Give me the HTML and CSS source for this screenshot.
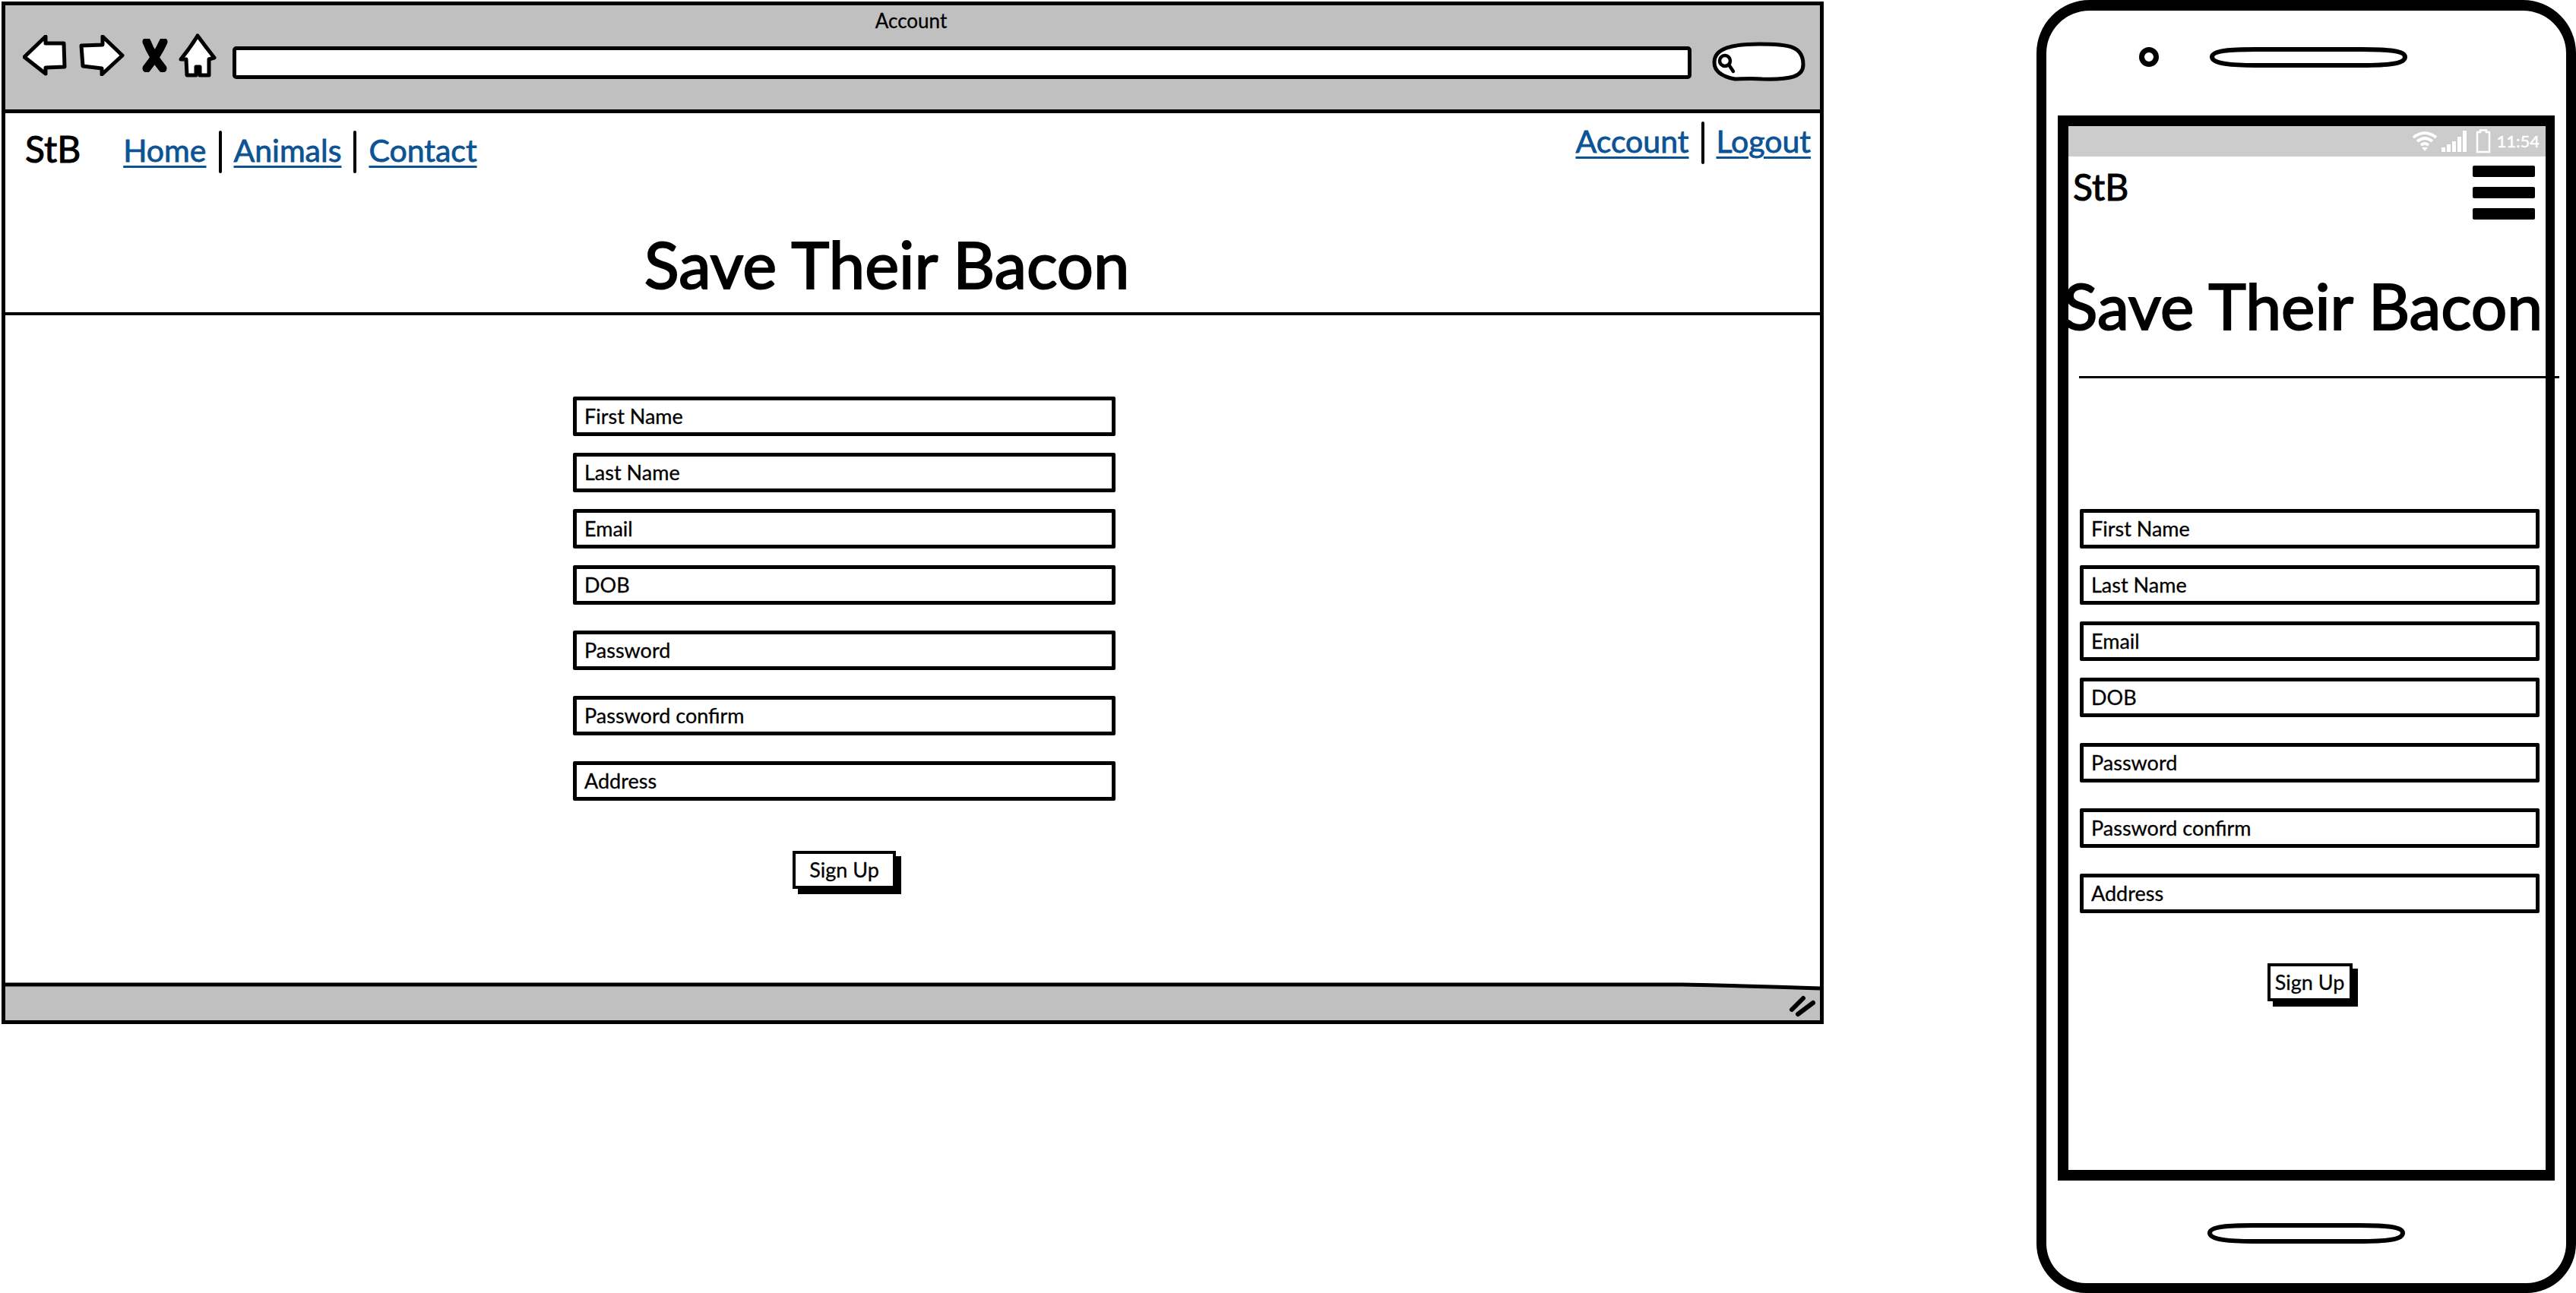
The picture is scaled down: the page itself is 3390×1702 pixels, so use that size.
FILE: index.html
```html
<!DOCTYPE html>
<html lang="en">
<head>
    <meta charset="UTF-8">
    <title>Save Their Bacon wireframes</title>
    <link rel="stylesheet" href="styles.css">
</head>
<body>
<div class="page">

    <!-- Desktop browser -->
    <div class="browser">
        <div class="toolbar">
            <div class="window-title">Account</div>
            <div class="controls">
                <svg class="tool tool-back" width="58" height="54" viewBox="0 0 58 54"><path class="ico" d="M2 29 L30 2 L30 11 L54 11 L55 42 L30 43 L30 51 Z"/></svg>
                <svg class="tool tool-forward" width="60" height="54" viewBox="0 0 60 54"><path class="ico" d="M57 27 L31 2 L31 13 L3 14 L5 41 L30 44 L30 52 Z"/></svg>
                <svg class="tool tool-stop" width="36" height="44" viewBox="0 0 36 44"><path class="ico-x" d="M7 4 Q14 22 28 39 M29 4 Q22 20 7 39"/></svg>
                <svg class="tool tool-home" width="50" height="58" viewBox="0 0 50 58"><path class="ico" d="M25 3 Q36 18 47 32 L40 34 L40 55 L28 55 L28 44 L23 44 L23 55 L11 55 L10 34 L3 34 Q16 18 25 3 Z"/></svg>
                <div class="address-bar"></div>
                <svg class="tool-search" width="124" height="54" viewBox="0 0 124 54">
                    <path class="ico" d="M3 27 C3 8 28 3 62 3 C100 3 120 5 120 30 C120 46 104 50 66 49 C50 48 38 49 30 49 C14 46 3 39 3 27 Z"/>
                    <circle class="ico-glass" cx="17" cy="25" r="7"/>
                    <path class="ico-glass" d="M22 30 L28 39"/>
                </svg>
            </div>
        </div>

        <div class="site">
            <nav class="site-nav">
                <div class="nav-left">
                    <span class="brand">StB</span>
                    <a class="nav-link" href="#">Home</a>
                    <i class="nav-sep"></i>
                    <a class="nav-link" href="#">Animals</a>
                    <i class="nav-sep"></i>
                    <a class="nav-link" href="#">Contact</a>
                </div>
                <div class="nav-right">
                    <a class="nav-link" href="#">Account</a>
                    <i class="nav-sep"></i>
                    <a class="nav-link" href="#">Logout</a>
                </div>
            </nav>
            <h1 class="site-title">Save Their Bacon</h1>
            <hr class="title-rule">

            <form class="signup">
                <div class="field">First Name</div>
                <div class="field">Last Name</div>
                <div class="field">Email</div>
                <div class="field">DOB</div>
                <div class="field spaced">Password</div>
                <div class="field spaced">Password confirm</div>
                <div class="field spaced">Address</div>
                <div class="btn-row"><div class="btn">Sign Up</div></div>
            </form>
        </div>

        <svg class="statusbar" width="2388" height="50" viewBox="0 0 2388 50">
            <path class="statusbar-fill" d="M0 3 L2206 3 Q2300 5 2388 8 L2388 50 L0 50 Z"/>
            <path class="statusbar-line" d="M0 3 L2206 3 Q2300 5 2388 8"/>
            <path class="statusbar-grip" d="M2351 36 L2366 21 M2359 42 L2379 27"/>
        </svg>
    </div>

    <!-- Phone -->
    <div class="phone">
        <div class="phone-top">
            <div class="camera"></div>
            <svg class="speaker" width="260" height="27" viewBox="0 0 260 27"><path d="M3 13 C3 4 30 3 60 3 L200 3 C235 3 257 5 257 13 C257 22 235 24 200 24 L60 24 C30 24 3 22 3 13 Z"/></svg>
        </div>
        <div class="screen">
            <div class="status">
                <svg width="34" height="28" viewBox="0 0 34 28"><path class="wifi" d="M2 9 Q17 -3 32 9 M7 14 Q17 6 27 14 M12 19 Q17 15 22 19"/><path class="wifi-dot" d="M13 22 L21 22 L17 27 Z"/></svg>
                <svg width="34" height="28" viewBox="0 0 34 28"><path class="bars" d="M0 22h5v6h-5z M7 18h5v10h-5z M14 14h5v14h-5z M21 8h5v20h-5z M28 0h5v28h-5z"/></svg>
                <svg class="battery" width="20" height="32" viewBox="0 0 20 32"><path class="batt" d="M2 4 H6 V1.500 H14 V4 H18 V30 H2 Z"/></svg>
                <span class="clock">11:54</span>
            </div>
            <div class="phone-nav">
                <span class="brand">StB</span>
                <div class="burger"><i></i><i></i><i></i></div>
            </div>
            <h1 class="phone-title">Save Their Bacon</h1>
            <hr class="phone-rule">
            <form class="signup phone-form">
                <div class="field">First Name</div>
                <div class="field">Last Name</div>
                <div class="field">Email</div>
                <div class="field">DOB</div>
                <div class="field spaced">Password</div>
                <div class="field spaced">Password confirm</div>
                <div class="field spaced">Address</div>
                <div class="btn-row"><div class="btn">Sign Up</div></div>
            </form>
        </div>
        <div class="phone-bottom">
            <svg class="speaker" width="260" height="27" viewBox="0 0 260 27"><path d="M3 13 C3 4 30 3 60 3 L200 3 C235 3 257 5 257 13 C257 22 235 24 200 24 L60 24 C30 24 3 22 3 13 Z"/></svg>
        </div>
    </div>

</div>
</body>
</html>
```

FILE: styles.css
```css
/* Basic Reset */
* {
    margin: 0;
    padding: 0;
    box-sizing: border-box;
}

body {
    font-family: Lato, "Open Sans", sans-serif;
    background-color: white;
    color: #000;
    width: 3390px;
    height: 1702px;
    overflow: hidden;
}

.page {
    display: flex;
    align-items: flex-start;
    padding-left: 2px;
}

/* Browser window */
.browser {
    width: 2398px;
    height: 1346px;
    margin-top: 2px;
    border: 5px solid #000;
    display: flex;
    flex-direction: column;
}

.toolbar {
    height: 142px;
    background-color: #c0c0c0;
    border-bottom: 5px solid #000;
    padding-left: 23px;
}

.window-title {
    height: 39px;
    padding: 7px 27px 0 0;
    text-align: center;
    font-size: 26px;
    line-height: 26px;
    -webkit-text-stroke: 0.3px #000;
}

.controls {
    display: flex;
    align-items: center;
    height: 62px;
}

.tool { margin-bottom: 8px; }
.tool-forward { margin-left: 16px; }
.tool-stop { margin-left: 22px; }
.tool-home { margin-left: 13px; }
.tool-search { margin: 10px 0 0 27px; }

.ico {
    fill: white;
    stroke: #000;
    stroke-width: 5;
    stroke-linejoin: round;
}

.ico-x {
    fill: none;
    stroke: #000;
    stroke-width: 11;
    stroke-linecap: round;
}

.ico-glass {
    fill: none;
    stroke: #000;
    stroke-width: 4.500;
    stroke-linecap: round;
}

.address-bar {
    width: 1920px;
    height: 43px;
    margin: 10px 0 0 21px;
    background-color: white;
    border: 5px solid #000;
    border-radius: 5px;
}

/* Page inside the browser */
.site {
    flex: 1;
}

.site-nav {
    display: flex;
    justify-content: space-between;
    align-items: flex-start;
    height: 113px;
    padding: 7px 12px 0 28px;
}

.nav-left,
.nav-right {
    display: flex;
    align-items: center;
}

.nav-left { padding-top: 12px; }

.brand {
    font-size: 48px;
    line-height: 56px;
    margin: -4px 56px 0 -2px;
    -webkit-text-stroke: 1px #000;
}

.nav-link {
    font-size: 41px;
    line-height: 56px;
    color: #0b5394;
    text-decoration: underline;
    text-decoration-thickness: 3px;
    text-underline-offset: 5px;
    -webkit-text-stroke: 0.8px #0b5394;
}

.nav-sep {
    width: 4px;
    height: 56px;
    margin: 4px 16px 0;
    background-color: #000;
    border-radius: 2px;
}

.site-title {
    height: 149px;
    padding: 39px 68px 0 0;
    text-align: center;
    font-size: 85px;
    line-height: 92px;
    font-weight: 400;
    -webkit-text-stroke: 2px #000;
}

.title-rule {
    height: 4px;
    border: none;
    background-color: #000;
}

/* Sign up form */
.signup {
    display: flex;
    flex-direction: column;
    width: 714px;
    margin: 107px 0 0 747px;
}

.field {
    height: 52px;
    margin-bottom: 22px;
    padding-left: 10px;
    border: 5px solid #000;
    border-radius: 2px;
    font-size: 27px;
    line-height: 41px;
    -webkit-text-stroke: 0.3px #000;
}

.field.spaced {
    margin-top: 12px;
}

.btn-row {
    display: flex;
    justify-content: center;
    margin-top: 44px;
}

.btn {
    width: 136px;
    height: 50px;
    border: 4px solid #000;
    box-shadow: 7px 7px 0 #000;
    background-color: white;
    text-align: center;
    font-size: 27px;
    line-height: 42px;
    -webkit-text-stroke: 0.3px #000;
}

/* Browser status bar */
.statusbar {
    display: block;
}

.statusbar-fill {
    fill: #c0c0c0;
}

.statusbar-line {
    fill: none;
    stroke: #000;
    stroke-width: 5;
}

.statusbar-grip {
    fill: none;
    stroke: #000;
    stroke-width: 6;
    stroke-linecap: round;
}

/* Phone */
.phone {
    width: 710px;
    height: 1702px;
    margin-left: 280px;
    border: 13px solid #000;
    border-top-width: 14px;
    border-radius: 70px 70px 65px 65px;
}

.phone-top {
    display: flex;
    align-items: center;
    gap: 67px;
    height: 138px;
    padding: 0 0 16px 122px;
}

.camera {
    width: 26px;
    height: 26px;
    border: 7px solid #000;
    border-radius: 50%;
}

.speaker {
    display: block;
}

.speaker path {
    fill: white;
    stroke: #000;
    stroke-width: 6;
}

.screen {
    width: 654px;
    height: 1402px;
    margin-left: 15px;
    border: solid #000;
    border-width: 14px 12px 14px 14px;
}

.status {
    display: flex;
    align-items: center;
    justify-content: flex-end;
    gap: 5px;
    height: 40px;
    padding-right: 8px;
    background-color: #ccc;
}

.wifi {
    fill: none;
    stroke: white;
    stroke-width: 4;
}

.wifi-dot { fill: white; }
.bars { fill: white; }

.batt {
    fill: none;
    stroke: white;
    stroke-width: 2.500;
}

.battery { margin: 0 2px 0 6px; }

.clock {
    color: white;
    font-size: 22px;
    line-height: 24px;
    font-weight: 400;
    -webkit-text-stroke: 0.5px white;
}

.phone-nav {
    display: flex;
    justify-content: space-between;
    align-items: flex-start;
    height: 150px;
    padding: 12px 14px 0 6px;
}

.phone-nav .brand {
    margin: 0;
}

.burger {
    display: flex;
    flex-direction: column;
    gap: 13px;
    width: 82px;
}

.burger i {
    display: block;
    height: 15px;
    background-color: #000;
    border-radius: 2px;
}

.phone-title {
    height: 139px;
    margin-left: -7px;
    font-size: 84px;
    line-height: 92px;
    font-weight: 400;
    white-space: nowrap;
    -webkit-text-stroke: 2px #000;
}

.phone-rule {
    height: 3px;
    margin: 0 -18px 0 14px;
    border: none;
    background-color: #000;
}

.signup.phone-form {
    width: 605px;
    margin: 172px 0 0 15px;
}

.phone-form .btn {
    width: 112px;
}

.phone-bottom {
    display: flex;
    justify-content: center;
    padding: 56px 0 0 0;
}
```
